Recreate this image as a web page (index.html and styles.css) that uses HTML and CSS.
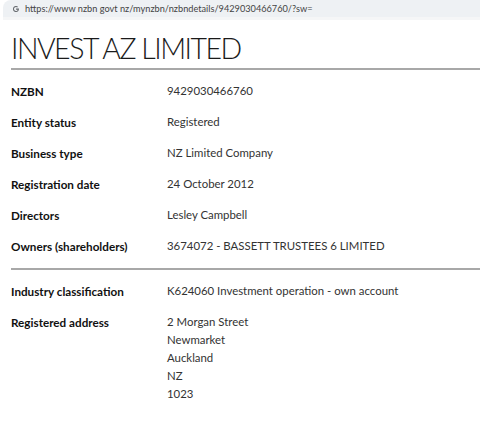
FILE: index.html
```html
<!DOCTYPE html>
<html>
<head>
<meta charset="utf-8">
<link rel="stylesheet" href="styles.css">
</head>
<body>
<div class="urlbar">
  <svg class="g" width="8" height="8" viewBox="0 0 8 8"><path d="M7 3.6H4.1v1.1h1.7C5.6 5.5 4.9 6 4 6 2.9 6 2 5.1 2 4s.9-2 2-2c.5 0 .9.2 1.2.5l.8-.8C5.5 1.3 4.8 1 4 1 2.3 1 1 2.3 1 4s1.3 3 3 3c1.7 0 2.9-1.2 2.9-3 0-.1 0-.3.1-.4z" fill="#5f6368"/></svg>
  <span class="url">https://www nzbn govt nz/mynzbn/nzbndetails/9429030466760/?sw=</span>
</div>
<main class="page">
  <h1 class="title">INVEST AZ LIMITED</h1>
  <dl class="details">
    <div class="row"><dt>NZBN</dt><dd>9429030466760</dd></div>
    <div class="row"><dt>Entity status</dt><dd>Registered</dd></div>
    <div class="row"><dt>Business type</dt><dd>NZ Limited Company</dd></div>
    <div class="row"><dt>Registration date</dt><dd>24 October 2012</dd></div>
    <div class="row"><dt>Directors</dt><dd>Lesley Campbell</dd></div>
    <div class="row"><dt>Owners (shareholders)</dt><dd>3674072 - BASSETT TRUSTEES 6 LIMITED</dd></div>
  </dl>
  <dl class="details second">
    <div class="row"><dt>Industry classification</dt><dd>K624060 Investment operation - own account</dd></div>
    <div class="row"><dt>Registered address</dt><dd class="addr"><span>2 Morgan Street</span><span>Newmarket</span><span>Auckland</span><span>NZ</span><span>1023</span></dd></div>
  </dl>
</main>
</body>
</html>
```

FILE: styles.css
```css
* { box-sizing: border-box; }
html, body { margin: 0; padding: 0; background: #fff; }
body { font-family: "Lato", "Liberation Sans", sans-serif; color: #222; }

.urlbar {
  margin: 0 0 0 3px;
  height: 20px;
  background: #eef1f4;
  border-bottom: 3px solid #f5f6f7;
  border-radius: 8px 0 0 0;
  display: flex;
  align-items: center;
  padding-left: 9px;
  gap: 5px;
}
.g { flex: none; }
.url { font-size: 9.2px; color: #444; }

.page { padding: 0 0 0 11px; }
.title {
  margin: 12px 0 0;
  font-weight: 300;
  font-size: 28.5px;
  line-height: 33px;
  color: #1a1a1a;
  padding-bottom: 3px;
  border-bottom: 2px solid #a8a8a8;
  letter-spacing: -1.5px;
}
.details { margin: 0; padding: 12px 0 0; }
.details.second { border-top: 2px solid #a8a8a8; padding-top: 12px; }
.row { display: flex; min-height: 31px; font-size: 11.7px; line-height: 18px; }
.row dt { width: 156px; flex: none; font-weight: 700; color: #111; }
.row dd { margin: 0; color: #333; font-size: 11.4px; }
.addr { display: flex; flex-direction: column; }
```
